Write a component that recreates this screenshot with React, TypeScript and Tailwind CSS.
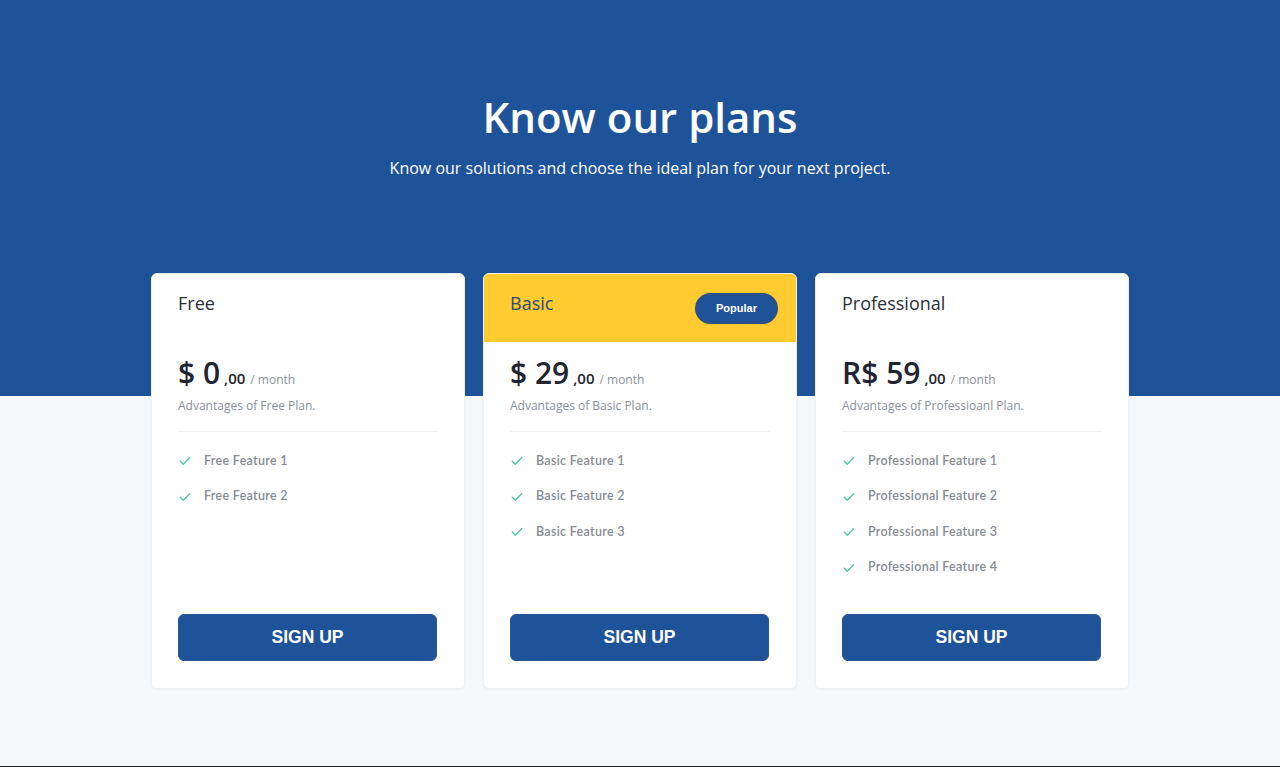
import React from "react";

type Plan = {
  name: string;
  currency: string;
  amount: string;
  desc: string;
  features: string[];
  popular?: boolean;
};

const plans: Plan[] = [
  { name: "Free", currency: "$", amount: "0", desc: "Advantages of Free Plan.", features: ["Free Feature 1", "Free Feature 2"] },
  { name: "Basic", currency: "$", amount: "29", desc: "Advantages of Basic Plan.", features: ["Basic Feature 1", "Basic Feature 2", "Basic Feature 3"], popular: true },
  { name: "Professional", currency: "R$", amount: "59", desc: "Advantages of Professioanl Plan.", features: ["Professional Feature 1", "Professional Feature 2", "Professional Feature 3", "Professional Feature 4"] },
];

function Check() {
  return (
    <svg width="14" height="14" viewBox="0 0 24 24" fill="none" stroke="#52c7a3" strokeWidth="2.4" strokeLinecap="round" strokeLinejoin="round">
      <path d="M4 12.5l5 5L20 6.5" />
    </svg>
  );
}

function Card({ p }: { p: Plan }) {
  return (
    <div className="w-[314px] h-[416px] bg-white rounded-[6px] border border-[#edf1f4] shadow-[0_1px_3px_rgba(0,0,0,0.04)] flex flex-col overflow-hidden">
      <div className={`h-[68px] shrink-0 flex items-start justify-between pl-[26px] pr-[18px] pt-[17px] ${p.popular ? "bg-[#ffcb30]" : "bg-white"}`}>
        <span className={`text-[18px] font-normal leading-[24px] ${p.popular ? "text-[#2c4a7a]" : "text-[#2a2f36]"}`}>{p.name}</span>
        {p.popular && (
          <span className="mt-[2px] w-[83px] h-[31px] rounded-full bg-[#1f5399] border-2 border-[#2d4f84] text-white text-[11px] font-bold flex items-center justify-center" style={{ fontFamily: "'Liberation Sans', Arial, sans-serif" }}>Popular</span>
        )}
      </div>
      <div className="px-[26px] flex flex-col flex-1">
        <div className="flex items-baseline mt-[12px] h-[38px]">
          <span className="text-[30px] font-semibold text-[#1e2430] leading-[38px]">{p.currency} {p.amount}</span>
          <span className="text-[15px] font-semibold text-[#1e2430] ml-[4px]">,00</span>
          <span className="text-[12px] text-[#8a9099] ml-[5px]">/ month</span>
        </div>
        <div className="text-[12px] text-[#8a9099] mt-[5px] leading-[18px]">{p.desc}</div>
        <div className="h-px bg-[#eef1f4] mt-[16px]" />
        <ul className="mt-[20px] flex flex-col gap-[17.5px]">
          {p.features.map((f) => (
            <li key={f} className="flex items-center gap-[12px] h-[18px]">
              <Check />
              <span className="text-[12.5px] font-semibold text-[#868b94] tracking-[0.3px]" style={{ fontFamily: "Lato, sans-serif" }}>{f}</span>
            </li>
          ))}
        </ul>
        <div className="flex-1" />
        <button className="mb-[27px] w-[259px] h-[47px] rounded-[6px] bg-[#1f5399] border border-[#2a5797] text-white text-[17.5px] font-bold" style={{ fontFamily: "'Liberation Sans', Arial, sans-serif" }}>SIGN UP</button>
      </div>
    </div>
  );
}

export default function App() {
  return (
    <div className="w-[1280px] h-[767px] bg-[#f6f9fb] flex flex-col relative overflow-hidden" style={{ fontFamily: "'Open Sans', sans-serif" }}>
      <div className="h-[396px] bg-[#1f5399] shrink-0 flex flex-col items-center pt-[90px]">
        <h1 className="text-[42px] font-semibold text-white leading-[54px]">Know our plans</h1>
        <p className="text-[16px] text-white mt-[13px] leading-[22px]">Know our solutions and choose the ideal plan for your next project.</p>
      </div>
      <div className="absolute left-0 right-0 top-[273px] flex justify-center gap-[18px]">
        {plans.map((p) => (
          <Card key={p.name} p={p} />
        ))}
      </div>
      <div className="absolute left-0 right-0 bottom-0 h-px bg-[#1a1c20]" />
    </div>
  );
}
